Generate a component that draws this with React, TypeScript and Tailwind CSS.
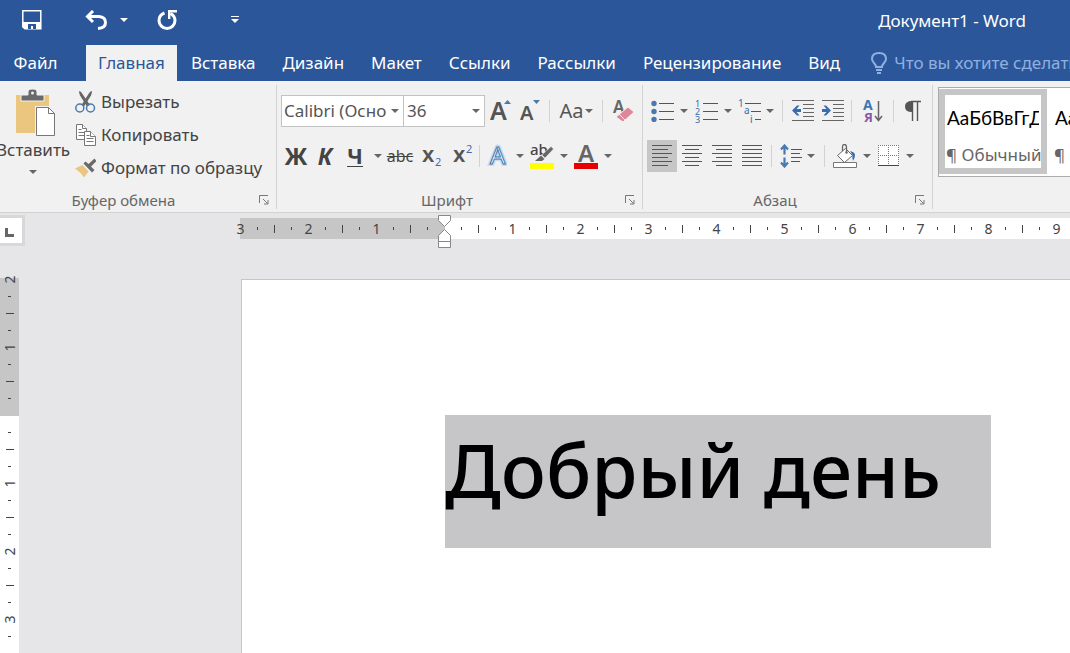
import type { ReactNode } from "react";

const tabs = ["Вставка", "Дизайн", "Макет", "Ссылки", "Рассылки", "Рецензирование", "Вид"];

function Arrow() {
  return (
    <svg viewBox="0 0 8 4" className="h-1 w-2 shrink-0 fill-[#666]">
      <path d="M0 0h8L4 4z" />
    </svg>
  );
}

function DropButton({ label }: { label: string }) {
  return (
    <button aria-label={label} className="flex h-8 w-[14px] shrink-0 items-center justify-center">
      <Arrow />
    </button>
  );
}

function Separator() {
  return <div className="h-[22px] w-px shrink-0 bg-[#d2d2d2]" />;
}

function Tool({ label, width, children }: { label: string; width: string; children: ReactNode }) {
  return (
    <button aria-label={label} className={"flex h-8 shrink-0 items-center justify-center " + width}>
      {children}
    </button>
  );
}

function Caption({ text }: { text: string }) {
  return (
    <div className="mt-auto mb-px flex h-4 items-center pr-[7px]">
      <span className="flex-1 pr-3 text-center text-[15px] leading-4 text-[#666]">{text}</span>
      <button aria-label={text + ": параметры"}>
        <svg viewBox="0 0 10 10" className="h-[10px] w-[10px]" fill="none" stroke="#777">
          <path d="M.5 8V.5H9" />
          <path d="M4 4l4.500 4.500M9 5v4H5" />
        </svg>
      </button>
    </div>
  );
}

function Lines({ rows }: { rows: number[][] }) {
  return (
    <svg viewBox="0 0 20 22" className="h-[22px] w-5" stroke="#555" shapeRendering="crispEdges">
      {rows.map(([from, to], i) => (
        <path key={i} d={`M${from} ${i * 4 + 0.5}H${to}`} />
      ))}
    </svg>
  );
}

function Clipboard() {
  return (
    <section className="flex w-[277px] shrink-0 flex-col border-r border-[#d2d2d2]">
      <div className="flex">
        <button className="flex w-[66px] shrink-0 flex-col items-center pt-1">
          <svg viewBox="0 0 44 48" className="h-12 w-11">
            <path d="M5 6h33v38H5z" fill="#ebc67f" />
            <path d="M10 12V6h7V3q0-3 4.500-3t4.500 3v3h7v6z" fill="#6a6a6a" stroke="#f1f1f1" />
            <circle cx="21.500" cy="4" r="1.500" fill="#f1f1f1" />
            <path d="M24 17h15l7 7v24h-22z" fill="#f1f1f1" />
            <path d="M25.500 18.500h12l6 6v22h-18z" fill="#fff" stroke="#777" />
            <path d="M37.500 18.500v6h6" fill="none" stroke="#777" />
          </svg>
          <span className="mt-[3px] text-[17px] leading-5 whitespace-nowrap text-[#444]">Вставить</span>
          <span className="mt-1 flex h-4 items-center">
            <Arrow />
          </span>
        </button>
        <div className="flex flex-col text-[17px] text-[#444]">
          <button className="flex h-[33px] items-center gap-[5px] pl-[9px]">
            <svg viewBox="0 0 21 22" className="h-[22px] w-[21px]" fill="none">
              <path d="M4 0q2 0 3.500 3L15 14l-3 1.500-7-11Q4 2 4 0z" fill="#666" />
              <path d="M17 0q-2 0-3.500 3L6.500 14l2.500 1.500 7-11Q17 2 17 0z" fill="#666" />
              <circle cx="4.800" cy="17" r="4" stroke="#4a78b0" strokeWidth="1.500" />
              <circle cx="15.500" cy="17" r="4" stroke="#4a78b0" strokeWidth="1.500" />
            </svg>
            Вырезать
          </button>
          <button className="flex h-[33px] items-center gap-[5px] pl-[9px]">
            <svg viewBox="0 0 21 22" className="h-[22px] w-[21px]" fill="#fff" stroke="#777">
              <path d="M1.500.5h6l4 4v11h-10z" />
              <path d="M7.500.5v4h4M3.500 5.500h3M3.500 8.500h6M3.500 11.500h6" />
              <path d="M9.500 7.500h6l5 5v9h-11z" />
              <path d="M15.500 7.500v5h5M11.500 11.500h3M11.500 14.500h7M11.500 17.500h7" />
            </svg>
            Копировать
          </button>
          <button className="flex h-[33px] items-center gap-[5px] pl-[9px] whitespace-nowrap">
            <svg viewBox="0 0 21 20" className="h-5 w-[21px]">
              <path d="M0 10.500L7.500 7l6 6.500L9 19.500q-3-5-9-9z" fill="#ebc67f" />
              <path d="M8.500 5.500L10.500 3.500l3 2.500L19.500.5l2 2.500-5.500 5.500L19.500 12l-2.500 2.500z" fill="#6a6a6a" />
            </svg>
            Формат по образцу
          </button>
        </div>
      </div>
      <Caption text="Буфер обмена" />
    </section>
  );
}

function FontGroup() {
  return (
    <section className="flex w-[366px] shrink-0 flex-col border-r border-[#d2d2d2] pl-1">
      <div className="flex items-center pt-[10px]">
        <label className="flex h-8 w-[123px] shrink-0 items-center border border-[#c3c3c3] bg-white pr-1">
          <select aria-label="Шрифт" className="w-full appearance-none truncate pl-[2px] text-[17px] text-clip text-[#555] outline-none">
            <option>Calibri (Осно</option>
          </select>
          <Arrow />
        </label>
        <label className="flex h-8 w-[81px] shrink-0 items-center border border-l-0 border-[#c3c3c3] bg-white pr-1">
          <select aria-label="Размер шрифта" className="w-full appearance-none pl-[3px] text-[17px] text-[#555] outline-none">
            <option>36</option>
          </select>
          <Arrow />
        </label>
        <Tool label="Увеличить размер" width="w-[31px]">
          <svg viewBox="0 0 22 24" className="h-6 w-[22px]">
            <text x="0" y="21" fontSize="25" fontWeight="600" fill="#555">A</text>
            <path d="M14 5l3.500-4L21 5z" fill="#4a78b0" />
          </svg>
        </Tool>
        <Tool label="Уменьшить размер" width="w-[30px]">
          <svg viewBox="0 0 22 24" className="h-6 w-[22px]">
            <text x="0" y="21" fontSize="20" fontWeight="600" fill="#555">A</text>
            <path d="M13 1h7l-3.500 4z" fill="#4a78b0" />
          </svg>
        </Tool>
        <div className="w-[3px] shrink-0" />
        <Separator />
        <button className="flex w-[52px] shrink-0 items-center justify-center gap-px text-[20px] text-[#555]">
          Aa
          <Arrow />
        </button>
        <Separator />
        <Tool label="Очистить формат" width="w-[39px]">
          <svg viewBox="0 0 22 24" className="h-6 w-[22px]">
            <text x="1" y="14" fontSize="17" fontWeight="600" fill="#666">A</text>
            <path d="M4 18L16 8l6 5-11 10z" fill="#dd8799" stroke="#f1f1f1" />
            <path d="M7 15l6 6" stroke="#f1f1f1" />
          </svg>
        </Tool>
      </div>
      <div className="flex items-center pt-[13px] text-[#444]">
        <Tool label="Полужирный" width="w-[30px]">
          <b className="text-[23px]">Ж</b>
        </Tool>
        <Tool label="Курсив" width="w-7">
          <b className="text-[23px] italic">К</b>
        </Tool>
        <Tool label="Подчёркнутый" width="w-8">
          <b className="border-b border-[#444] text-[22px] leading-[21px]">Ч</b>
        </Tool>
        <DropButton label="Вид подчёркивания" />
        <Tool label="Зачёркнутый" width="w-[30px]">
          <span className="text-[16px] line-through">abc</span>
        </Tool>
        <Tool label="Подстрочный знак" width="w-[33px]">
          <svg viewBox="0 0 20 24" className="h-6 w-5">
            <text x="0" y="18" fontSize="22" fontWeight="600" fill="#555">x</text>
            <text x="13" y="22" fontSize="11" fill="#3a6cab">2</text>
          </svg>
        </Tool>
        <Tool label="Надстрочный знак" width="w-[29px]">
          <svg viewBox="0 0 20 24" className="h-6 w-5">
            <text x="0" y="18" fontSize="22" fontWeight="600" fill="#555">x</text>
            <text x="13" y="9" fontSize="11" fill="#3a6cab">2</text>
          </svg>
        </Tool>
        <div className="w-[2px]" />
        <Separator />
        <Tool label="Текстовые эффекты" width="w-[33px]">
          <svg viewBox="0 0 20 24" className="h-6 w-5">
            <text x="3" y="20" fontSize="24" fill="#fff" stroke="#c3dcf0" strokeWidth="4">A</text>
            <text x="3" y="20" fontSize="24" fill="#fff" stroke="#3f73b0" strokeWidth="1">A</text>
          </svg>
        </Tool>
        <DropButton label="Виды эффектов" />
        <Tool label="Цвет выделения" width="w-[30px]">
          <svg viewBox="0 0 24 26" className="h-[26px] w-6">
            <text x="0" y="12" fontSize="15" fontWeight="500" fill="#444">ab</text>
            <path d="M21 3.500l2.500 2.500L15 15l-3-3z" fill="#666" stroke="#f1f1f1" strokeWidth=".5" />
            <path d="M11 12.500l3.500 3.500L12 18H5z" fill="#666" />
            <path d="M0 20h24v6H0z" fill="#ff0" />
          </svg>
        </Tool>
        <DropButton label="Цвета выделения" />
        <Tool label="Цвет текста" width="w-[30px]">
          <svg viewBox="0 0 24 26" className="h-[26px] w-6">
            <text x="4" y="19" fontSize="24" fontWeight="600" fill="#666">A</text>
            <path d="M0 20h24v6H0z" fill="#e60000" />
          </svg>
        </Tool>
        <DropButton label="Цвета текста" />
      </div>
      <Caption text="Шрифт" />
    </section>
  );
}

function ParagraphGroup() {
  return (
    <section className="flex w-[290px] shrink-0 flex-col border-r border-[#d2d2d2] pl-1">
      <div className="flex items-center pt-[10px]">
        <Tool label="Маркеры" width="w-[30px]">
          <svg viewBox="0 0 23 22" className="h-[22px] w-[23px]">
            <path d="M8 3.500h15M8 11.500h15M8 19.500h15" stroke="#555" />
            <g fill="#4a78b0">
              <circle cx="3" cy="3.500" r="2.700" />
              <circle cx="3" cy="11.500" r="2.700" />
              <circle cx="3" cy="19.500" r="2.700" />
            </g>
          </svg>
        </Tool>
        <DropButton label="Библиотека маркеров" />
        <Tool label="Нумерация" width="w-[30px]">
          <svg viewBox="0 0 23 24" className="h-6 w-[23px]">
            <path d="M8 4.500h15M8 12.500h15M8 20.500h15" stroke="#555" />
            <g fill="#3a6cab" fontSize="9">
              <text x="0" y="8">1</text>
              <text x="0" y="16">2</text>
              <text x="0" y="24">3</text>
            </g>
          </svg>
        </Tool>
        <DropButton label="Библиотека нумерации" />
        <Tool label="Многоуровневый список" width="w-7">
          <svg viewBox="0 0 23 24" className="h-6 w-[23px]">
            <path d="M7 4.500h16M13 12.500h10M17 20.500h6" stroke="#555" />
            <g fill="#3a6cab" fontSize="10">
              <text x="0" y="8">1</text>
              <text x="6" y="15">a</text>
              <text x="12" y="24">i</text>
            </g>
          </svg>
        </Tool>
        <DropButton label="Библиотека списков" />
        <div className="w-[5px]" />
        <Separator />
        <div className="w-[6px]" />
        <Tool label="Уменьшить отступ" width="w-[30px]">
          <svg viewBox="0 0 22 22" className="h-[22px] w-[22px]">
            <path d="M0 .5h22M11 4.500h11M11 8.500h11M11 12.500h11M11 16.500h11M0 20.500h22" stroke="#666" />
            <path d="M0 10.500l5-5h2.500L4.500 9H9v3H4.500l3 3.500H5z" fill="#3a6cab" />
          </svg>
        </Tool>
        <Tool label="Увеличить отступ" width="w-[30px]">
          <svg viewBox="0 0 22 22" className="h-[22px] w-[22px]">
            <path d="M0 .5h22M11 4.500h11M11 8.500h11M11 12.500h11M11 16.500h11M0 20.500h22" stroke="#666" />
            <path d="M9 10.500l-5-5H1.500L4.500 9H0v3h4.500l-3 3.500H4z" fill="#3a6cab" />
          </svg>
        </Tool>
        <div className="w-[3px]" />
        <Separator />
        <Tool label="Сортировка" width="w-[41px]">
          <svg viewBox="0 0 20 26" className="h-[26px] w-5">
            <text x="0" y="12" fontSize="14" fontWeight="700" fill="#3a78b4">А</text>
            <text x="1" y="24" fontSize="13" fontWeight="700" fill="#8a55a8">Я</text>
            <path d="M15.500 3v19M12 18l3.500 4.500L19 18" stroke="#666" strokeWidth="1.500" fill="none" />
          </svg>
        </Tool>
        <Separator />
        <Tool label="Непечатаемые знаки" width="w-[38px]">
          <svg viewBox="0 0 16 22" className="h-[22px] w-4">
            <path d="M7 1v11Q0 12 0 6.500T7 1z" fill="#555" />
            <path d="M6 1.500h10M7.500 1v20M12.500 1v20" stroke="#555" strokeWidth="1.400" />
          </svg>
        </Tool>
      </div>
      <div className="flex items-center pt-[13px]">
        <button aria-label="По левому краю" className="flex h-8 w-[30px] items-center justify-center bg-[#c6c6c6]">
          <Lines rows={[[0, 20], [0, 16], [0, 20], [0, 16], [0, 20], [0, 16]]} />
        </button>
        <Tool label="По центру" width="w-[30px]">
          <Lines rows={[[0, 20], [3, 17], [0, 20], [3, 17], [0, 20], [3, 17]]} />
        </Tool>
        <Tool label="По правому краю" width="w-[30px]">
          <Lines rows={[[0, 20], [4, 20], [0, 20], [4, 20], [0, 20], [4, 20]]} />
        </Tool>
        <Tool label="По ширине" width="w-[30px]">
          <Lines rows={[[0, 20], [0, 20], [0, 20], [0, 20], [0, 20], [0, 20]]} />
        </Tool>
        <div className="w-1" />
        <Separator />
        <div className="w-[6px]" />
        <Tool label="Интервал" width="w-[26px]">
          <svg viewBox="0 0 22 24" className="h-6 w-[22px]">
            <path d="M11 5.500h11M11 9.500h9M11 13.500h11M11 17.500h9" stroke="#555" />
            <path d="M4.500 2v8.500M1 5.500L4.500 1.500 8 5.500M4.500 13.500V22M1 18.500l3.500 4 3.500-4" stroke="#4a78b0" strokeWidth="2.200" fill="none" />
          </svg>
        </Tool>
        <DropButton label="Варианты интервала" />
        <div className="w-[6px]" />
        <Separator />
        <div className="w-1" />
        <Tool label="Заливка" width="w-[31px]">
          <svg viewBox="0 0 24 24" className="h-6 w-6">
            <path d="M4.500 11.500l8-7 7 7-8 7z" fill="#fff" stroke="#666" />
            <path d="M9.500 7V3q0-2.500 2-2.500t2 2.500v5" fill="none" stroke="#666" strokeWidth="1.300" />
            <circle cx="13.500" cy="8.500" r="1.200" fill="#666" />
            <path d="M17 7q5 1 5 4t-2 6q-1-3-.5-6z" fill="#3a6cab" />
            <path d="M.5 18.500h23v5H.5z" fill="#fff" stroke="#777" />
          </svg>
        </Tool>
        <DropButton label="Цвета заливки" />
        <Tool label="Границы" width="w-[29px]">
          <svg viewBox="0 0 21 22" className="h-[22px] w-[21px]">
            <path d="M0 0h21v21H0z" fill="#fff" />
            <path d="M0 .5h21M0 10.500h21M.5 0v20M10.500 0v20M20.500 0v20" stroke="#777" strokeDasharray="1 1" />
            <path d="M0 20.500h21" stroke="#444" />
          </svg>
        </Tool>
        <DropButton label="Виды границ" />
      </div>
      <Caption text="Абзац" />
    </section>
  );
}

function Styles() {
  return (
    <section className="flex min-w-0 flex-1 overflow-hidden pt-[2px] pl-[5px]">
      <div className="flex h-[90px] min-w-0 flex-1 overflow-hidden border border-r-0 border-[#ababab] bg-white pt-px">
        <button className="flex h-[85px] w-[108px] shrink-0 flex-col border-6 border-[#c6c6c6] text-left whitespace-nowrap">
          <span className="w-[94px] overflow-hidden pt-[11px] pl-[2px] font-[Lato] text-[19px] leading-6 text-black">АаБбВвГгДд</span>
          <span className="w-full overflow-hidden pt-[13px] pl-px text-[17px] leading-6 text-[#666]">¶ Обычный</span>
        </button>
        <button className="flex h-[85px] w-[108px] shrink-0 flex-col border-6 border-white text-left whitespace-nowrap">
          <span className="pt-[11px] pl-[2px] font-[Lato] text-[19px] leading-6 text-black">АаБбВвГгДд</span>
          <span className="pt-[13px] pl-px text-[17px] leading-6 text-[#666]">¶ Без инте...</span>
        </button>
      </div>
    </section>
  );
}

// Four cells make one centimetre: number, dot, dash, dot
function HorizontalTick({ n }: { n: number }) {
  const step = Math.abs(n) % 4;
  return (
    <span className="flex h-full w-[17px] shrink-0 items-center justify-center text-[14px] text-[#444]">
      {step === 0 ? Math.abs(n) / 4 : <i className={step === 2 ? "h-2 w-px bg-[#444]" : "h-[3px] w-px bg-[#444]"} />}
    </span>
  );
}

function VerticalTick({ n }: { n: number }) {
  const step = Math.abs(n) % 4;
  return (
    <span className="flex h-[17px] w-full shrink-0 items-center justify-center text-[14px] text-[#444]">
      {step === 0 ? (
        <span className="-rotate-90">{Math.abs(n) / 4}</span>
      ) : (
        <i className={step === 2 ? "h-px w-2 bg-[#444]" : "h-px w-[3px] bg-[#444]"} />
      )}
    </span>
  );
}

function range(from: number, to: number) {
  return Array.from({ length: to - from + 1 }, (_, i) => from + i);
}

export default function App() {
  return (
    <div className="flex h-screen flex-col overflow-hidden bg-[#e6e6e8] font-['Noto_Sans',sans-serif]">
      <header className="bg-[#2b579a] text-white">
        <div className="flex h-[45px] items-center pr-11 pb-[6px] pl-[22px]">
          <button aria-label="Сохранить">
            <svg viewBox="0 0 20 20" className="h-5 w-5">
              <path d="M.8.8h18v18H3l-2.200-2z" fill="none" stroke="#fff" strokeWidth="1.500" />
              <path d="M1 12h18v7H3l-2-2z" fill="#fff" />
              <path d="M6 14h8v5h-3v-3H9v3H6z" fill="#2b579a" />
            </svg>
          </button>
          <button aria-label="Отменить" className="ml-[43px]">
            <svg viewBox="0 0 23 20" className="h-5 w-[23px]" fill="none" stroke="#fff" strokeWidth="3">
              <path d="M8 1L2.500 6.500 8 12M3 6.500h11q6.500.5 6.500 6t-7.500 6" />
            </svg>
          </button>
          <button aria-label="Список отмены" className="ml-3">
            <svg viewBox="0 0 8 4" className="h-1 w-2 fill-white">
              <path d="M0 0h8L4 4z" />
            </svg>
          </button>
          <button aria-label="Повторить" className="ml-7">
            <svg viewBox="0 0 22 22" className="h-[22px] w-[22px]" fill="none" stroke="#fff" strokeWidth="3">
              <path d="M8.500 4Q3 6 3 11.500a8 8 0 0 0 16 0Q19 7 14.500 4.500" />
              <path d="M12 2.200h9M13.200 1v9" strokeWidth="2.400" />
            </svg>
          </button>
          <button aria-label="Настройка панели" className="ml-[53px]">
            <svg viewBox="0 0 8 8" className="h-2 w-2 fill-white">
              <path d="M0 0h8v1H0zM0 3h8L4 7z" />
            </svg>
          </button>
          <h1 className="ml-auto pt-[2px] text-[17px]">Документ1 - Word</h1>
        </div>
        <nav className="flex h-9 items-stretch text-[17px]">
          <button className="w-[86px] pr-[15px]">Файл</button>
          <button className="bg-[#f1f1f1] px-3 text-[#2b579a]">Главная</button>
          {tabs.map((tab) => (
            <button key={tab} className="pr-[13px] pl-[14px]">
              {tab}
            </button>
          ))}
          <label className="flex min-w-0 flex-1 items-center gap-[7px] pl-[18px] text-[#a3bde3]">
            <svg viewBox="0 0 16 22" className="h-[22px] w-4 shrink-0" fill="none" stroke="#8fb0e0" strokeWidth="2">
              <path d="M5 15q0-2-2-4Q1 9 1 7q0-6 7-6t7 6q0 2-2 4t-2 4zM5 18h6M6 21h4" />
            </svg>
            <input
              aria-label="Помощник"
              placeholder="Что вы хотите сделать"
              className="w-full min-w-0 bg-transparent outline-none placeholder:text-[#8fb0e0]"
            />
          </label>
        </nav>
      </header>

      <div className="flex h-[132px] shrink-0 border-b border-[#d2d2d2] bg-[#f1f1f1] pt-1 pb-[3px]">
        <Clipboard />
        <FontGroup />
        <ParagraphGroup />
        <Styles />
      </div>

      <div className="flex h-[65px] shrink-0 items-start">
        <div className="mt-[2px] w-[25px] border-3 border-l-0 border-[#d8d8d8]">
          <button aria-label="Табуляция" className="flex h-[25px] w-full items-center bg-white pt-1 pl-[5px]">
            <i className="h-[9px] w-[9px] border-b-3 border-l-3 border-[#666]" />
          </button>
        </div>
        <div className="mt-[5px] ml-[215px] flex h-[21px] min-w-0 flex-1">
          <div className="flex w-[205px] shrink-0 bg-[#c6c6c6]">
            <div className="-ml-2 flex">
              {range(-12, -1).map((n) => (
                <HorizontalTick key={n} n={n} />
              ))}
            </div>
          </div>
          <div className="relative min-w-0 flex-1 bg-white">
            <div className="flex h-full overflow-hidden pl-2">
              {range(1, 100).map((n) => (
                <HorizontalTick key={n} n={n} />
              ))}
            </div>
            <svg viewBox="0 0 13 34" className="absolute -top-1 -left-[7px] h-[34px] w-[13px]" fill="#fff" stroke="#888">
              <path d="M.5 1.500h12v5l-6 6-6-6z" />
              <path d="M.5 33.500v-12l6-6 6 6v12zM.5 27.500h12" />
            </svg>
          </div>
        </div>
      </div>

      <main className="flex min-h-0 flex-1">
        <div className="flex w-[19px] shrink-0 flex-col">
          <div className="h-[138px] shrink-0 bg-[#c6c6c6]">
            <div className="-mt-[7px]">
              {range(-8, -1).map((n) => (
                <VerticalTick key={n} n={n} />
              ))}
            </div>
          </div>
          <div className="min-h-0 flex-1 overflow-hidden bg-white pt-2">
            {range(1, 80).map((n) => (
              <VerticalTick key={n} n={n} />
            ))}
          </div>
        </div>
        <article className="mt-px ml-[222px] flex-1 border-t border-l border-[#c6c6c6] bg-white pt-[135px] pl-[203px]">
          <p className="h-[133px] w-[546px] bg-[#c6c6c8] text-[75px] leading-[108px] font-medium whitespace-nowrap text-black">
            Добрый день
          </p>
        </article>
      </main>
    </div>
  );
}
